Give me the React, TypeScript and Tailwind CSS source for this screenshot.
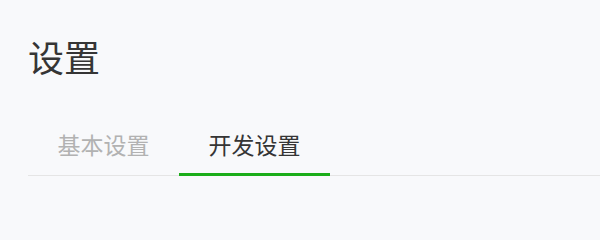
export default function App() {
  const tabs = ["基本设置", "开发设置"];
  const active = 1;

  return (
    <div
      className="min-h-screen bg-[#f8f9fb] pl-[28px] pt-[36px]"
      style={{ fontFamily: '"Noto Sans CJK SC", "Noto Sans", sans-serif' }}
    >
      <h1 className="text-[36px] leading-[40px] font-normal text-[#353535]">设置</h1>

      <div className="mt-[42px] flex border-b border-[#e5e5e5]">
        {tabs.map((tab, i) => (
          <div
            key={tab}
            className={
              i === active
                ? "-mb-px w-[151px] border-b-[3px] border-[#1aad19] pt-[14px] pb-[16px] text-center text-[23px] leading-[24px] text-[#353535]"
                : "w-[151px] pt-[14px] pb-[19px] text-center text-[23px] leading-[24px] text-[#b2b2b2]"
            }
          >
            {tab}
          </div>
        ))}
      </div>
    </div>
  );
}
